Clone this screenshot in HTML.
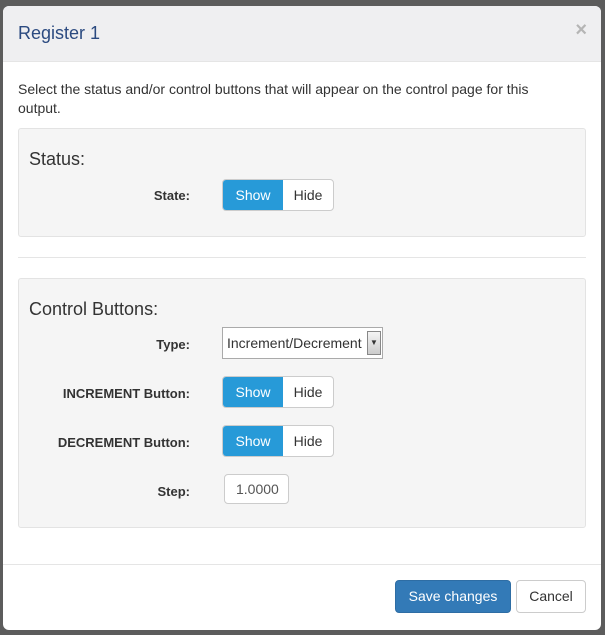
<!DOCTYPE html>
<html><head><style>
*{box-sizing:border-box;margin:0;padding:0}
body{width:605px;height:635px;background:#5c5c5c;font-family:"Liberation Sans",sans-serif;position:relative;overflow:hidden;color:#333}
.modal{position:absolute;left:3px;top:6px;width:598px;height:624px;background:#fff;border-radius:6px;overflow:hidden}
.hdr{height:56px;background:#efeff1;border-bottom:1px solid #e5e5e5;position:relative}
.hdr h4{position:absolute;left:15px;top:17px;font-size:18px;font-weight:normal;color:#2b4a80}
.x{position:absolute;right:14px;top:13px;font-size:20px;font-weight:bold;color:#b5b5b5}
.abs{position:absolute}
.p{left:15px;top:74px;font-size:14px;line-height:19px;width:540px}
.well{left:15px;width:568px;background:#f5f5f5;border:1px solid #e3e3e3;border-radius:3px}
.h{font-size:18px;left:10px}
.lbl{font-size:13px;font-weight:bold;text-align:right;width:200px;left:-29px}
.grp{left:203px;width:112px;height:32px;border:1px solid #ccc;border-radius:4px;overflow:hidden;display:flex;font-size:14px;background:#fff}
.grp div{line-height:30px;text-align:center}
.grp .s{width:60px;background:#279ad8;color:#fff}
.grp .hd{flex:1}
</style></head><body>
<div class="modal">
<div class="hdr"><h4>Register 1</h4><div class="x">×</div></div>
<div class="abs p">Select the status and/or control buttons that will appear on the control page for this output.</div>
<div class="abs well" style="top:122px;height:109px">
 <div class="abs h" style="top:20px">Status:</div>
 <div class="abs lbl" style="top:59px">State:</div>
 <div class="abs grp" style="top:50px"><div class="s">Show</div><div class="hd">Hide</div></div>
</div>
<div class="abs" style="left:15px;top:251px;width:568px;border-top:1px solid #e5e5e5"></div>
<div class="abs well" style="top:272px;height:250px">
 <div class="abs h" style="top:20px">Control Buttons:</div>
 <div class="abs lbl" style="top:58px">Type:</div>
 <div class="abs" style="left:203px;top:48px;width:161px;height:32px;border:1px solid #aaa;background:#fff;font-size:14px;line-height:30px;padding-left:4px">Increment/Decrement
  <div class="abs" style="right:1px;top:3px;width:14px;height:24px;border:1px solid #888;background:linear-gradient(#f4f4f4,#ccc);font-size:8px;line-height:22px;text-align:center">▼</div></div>
 <div class="abs lbl" style="top:107px">INCREMENT Button:</div>
 <div class="abs grp" style="top:97px"><div class="s">Show</div><div class="hd">Hide</div></div>
 <div class="abs lbl" style="top:156px">DECREMENT Button:</div>
 <div class="abs grp" style="top:146px"><div class="s">Show</div><div class="hd">Hide</div></div>
 <div class="abs lbl" style="top:205px">Step:</div>
 <div class="abs" style="left:205px;top:195px;width:65px;height:30px;border:1px solid #ccc;border-radius:4px;background:#fff;font-size:14px;line-height:28px;padding-left:11px;color:#555;overflow:hidden;white-space:nowrap">1.0000</div>
</div>
<div class="abs" style="left:0;top:558px;width:598px;border-top:1px solid #e5e5e5"></div>
<div class="abs" style="left:392px;top:574px;width:116px;height:33px;background:#337ab7;border:1px solid #2e6da4;border-radius:4px;color:#fff;font-size:14px;line-height:31px;text-align:center">Save changes</div>
<div class="abs" style="left:513px;top:574px;width:70px;height:33px;background:#fff;border:1px solid #ccc;border-radius:4px;font-size:14px;line-height:31px;text-align:center">Cancel</div>
</div>
</body></html>
